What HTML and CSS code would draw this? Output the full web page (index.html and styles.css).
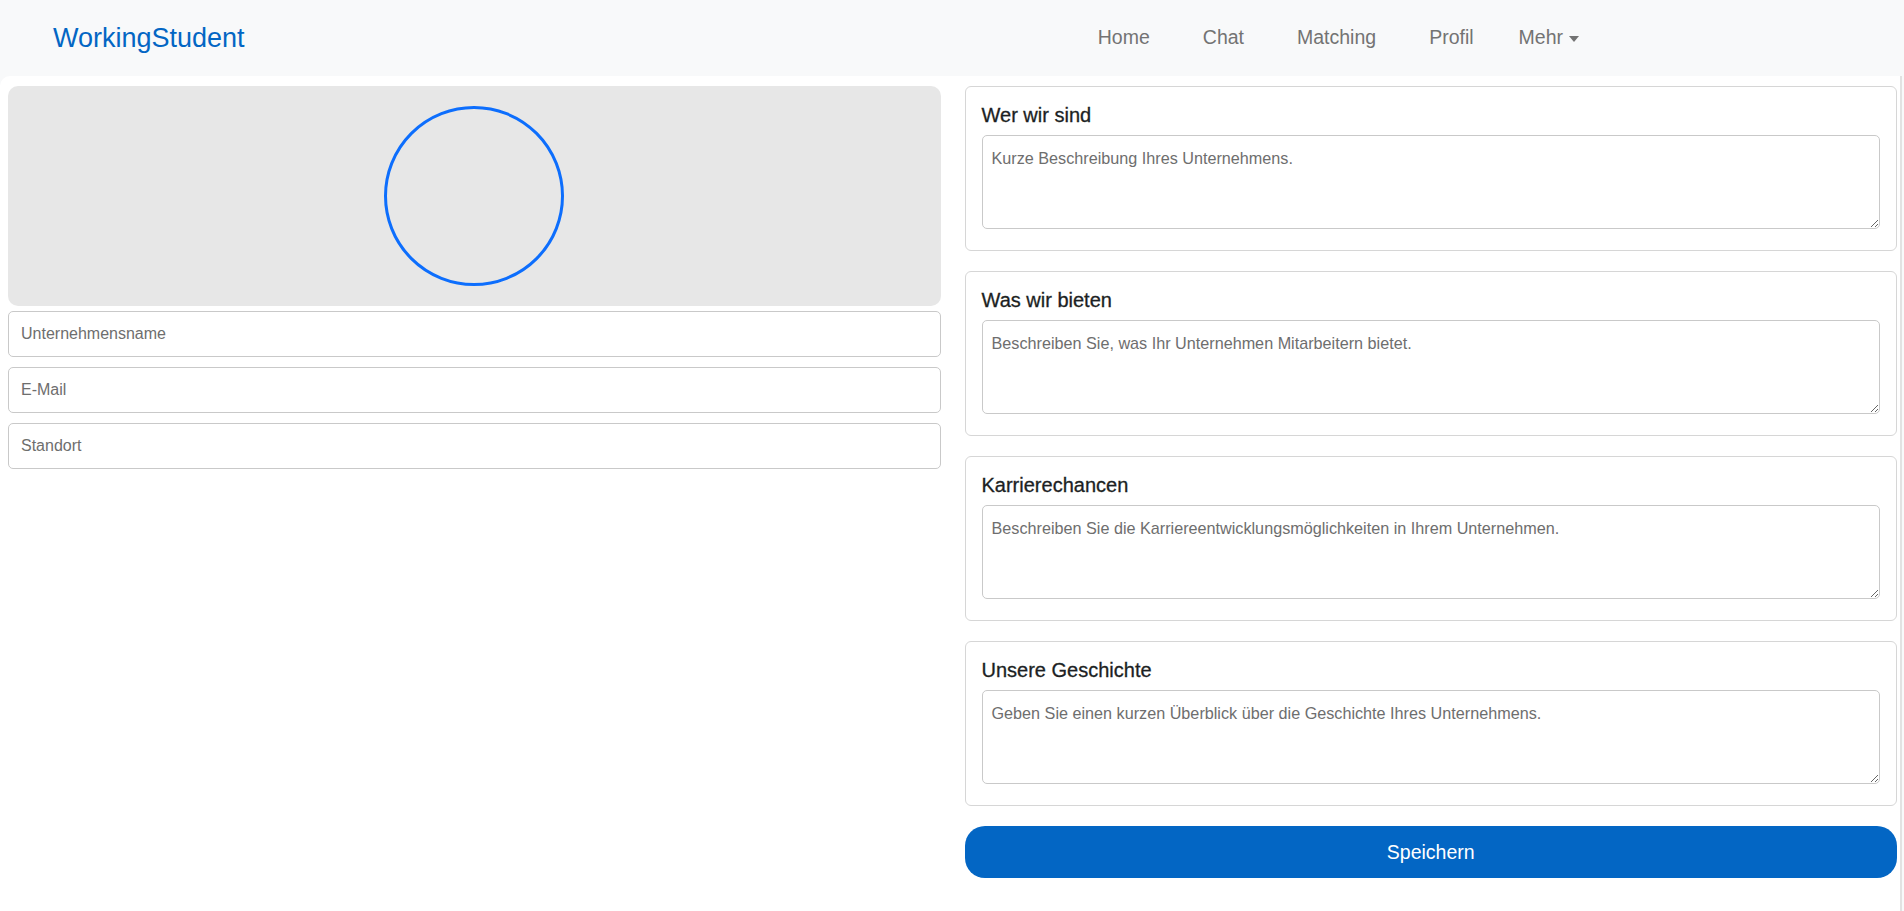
FILE: index.html
```html
<!DOCTYPE html>
<html lang="de">
<head>
<meta charset="utf-8">
<title>WorkingStudent – Unternehmensprofil</title>
<link rel="stylesheet" href="styles.css">
</head>
<body>
<header class="navbar">
  <a class="brand" href="#">WorkingStudent</a>
  <nav class="nav">
    <a class="nav-link" href="#">Home</a>
    <a class="nav-link" href="#">Chat</a>
    <a class="nav-link" href="#">Matching</a>
    <a class="nav-link" href="#">Profil</a>
    <a class="nav-link dropdown" href="#">Mehr<span class="caret"></span></a>
  </nav>
</header>
<main class="main">
  <section class="col-left">
    <div class="avatar-box"><div class="avatar-circle"></div></div>
    <input class="field" type="text" placeholder="Unternehmensname">
    <input class="field" type="email" placeholder="E-Mail">
    <input class="field" type="text" placeholder="Standort">
  </section>
  <section class="col-right">
    <div class="card">
      <h5 class="card-title">Wer wir sind</h5>
      <textarea class="area" placeholder="Kurze Beschreibung Ihres Unternehmens."></textarea>
    </div>
    <div class="card">
      <h5 class="card-title">Was wir bieten</h5>
      <textarea class="area" placeholder="Beschreiben Sie, was Ihr Unternehmen Mitarbeitern bietet."></textarea>
    </div>
    <div class="card">
      <h5 class="card-title">Karrierechancen</h5>
      <textarea class="area" placeholder="Beschreiben Sie die Karriereentwicklungsmöglichkeiten in Ihrem Unternehmen."></textarea>
    </div>
    <div class="card">
      <h5 class="card-title">Unsere Geschichte</h5>
      <textarea class="area" placeholder="Geben Sie einen kurzen Überblick über die Geschichte Ihres Unternehmens."></textarea>
    </div>
    <button class="save" type="button">Speichern</button>
  </section>
</main>
</body>
</html>
```
FILE: styles.css
```css
* { box-sizing: border-box; }

html, body {
  margin: 0;
  padding: 0;
}

body {
  background: #f8f9fa;
  font-family: "Liberation Sans", Arial, Helvetica, sans-serif;
  color: #212529;
  min-height: 911px;
}

.navbar {
  height: 76px;
  display: flex;
  align-items: center;
  padding: 0 325px 0 53px;
  background: #f8f9fa;
}

.brand {
  font-size: 27px;
  color: #0366c4;
  text-decoration: none;
  line-height: 1;
}

.nav {
  margin-left: auto;
  display: flex;
  align-items: center;
  gap: 53px;
}

.nav-link {
  font-size: 19.5px;
  color: #737373;
  text-decoration: none;
  line-height: 1;
}

.nav-link.dropdown {
  margin-left: -8px;
  display: inline-flex;
  align-items: center;
}

.caret {
  display: inline-block;
  margin-left: 6px;
  margin-top: 1px;
  width: 0;
  height: 0;
  border-top: 6px solid #737373;
  border-left: 5.5px solid transparent;
  border-right: 5.5px solid transparent;
}

.main {
  display: flex;
  gap: 24px;
  align-items: flex-start;
  background: #ffffff;
  border-top-left-radius: 10px;
  border-right: 2px solid #e2e2e2;
  margin-right: 2px;
  padding: 10px 3px 20px 8px;
  min-height: 835px;
}

.col-left,
.col-right {
  flex: 1 1 0;
  min-width: 0;
  display: flex;
  flex-direction: column;
}

.avatar-box {
  height: 220px;
  background: #e7e7e7;
  border-radius: 10px;
  display: flex;
  align-items: center;
  justify-content: center;
  margin-bottom: 5px;
}

.avatar-circle {
  width: 180px;
  height: 180px;
  border-radius: 50%;
  border: 3px solid #0d6efd;
}

.field {
  display: block;
  width: 100%;
  height: 46px;
  margin: 0 0 10px 0;
  padding: 0 12px;
  border: 1px solid #c9c9c9;
  border-radius: 5px;
  background: #fff;
  font-family: "Liberation Sans", Arial, Helvetica, sans-serif;
  font-size: 16px;
  color: #212529;
  outline: none;
}

.field::placeholder,
.area::placeholder {
  color: #6e6e6e;
  opacity: 1;
}

.card {
  border: 1px solid #d6d6d6;
  border-radius: 6px;
  padding: 16px 16px 21px 16px;
  margin-bottom: 20px;
  background: #fff;
}

.card-title {
  margin: 0 0 8px 0;
  font-size: 20px;
  line-height: 24px;
  font-weight: 500;
  color: #1c1f23;
  -webkit-text-stroke: 0.3px #1c1f23;
}

.area {
  display: block;
  width: 100%;
  height: 94px;
  margin: 0;
  padding: 10px 9px;
  border: 1px solid #c9c9c9;
  border-radius: 5px;
  font-family: "Liberation Sans", Arial, Helvetica, sans-serif;
  font-size: 16.2px;
  line-height: 24px;
  color: #212529;
  resize: vertical;
  outline: none;
}

.save {
  height: 52px;
  width: 100%;
  border: none;
  border-radius: 20px;
  background: #0366c4;
  color: #ffffff;
  font-family: "Liberation Sans", Arial, Helvetica, sans-serif;
  font-size: 19.5px;
  cursor: pointer;
}
```
